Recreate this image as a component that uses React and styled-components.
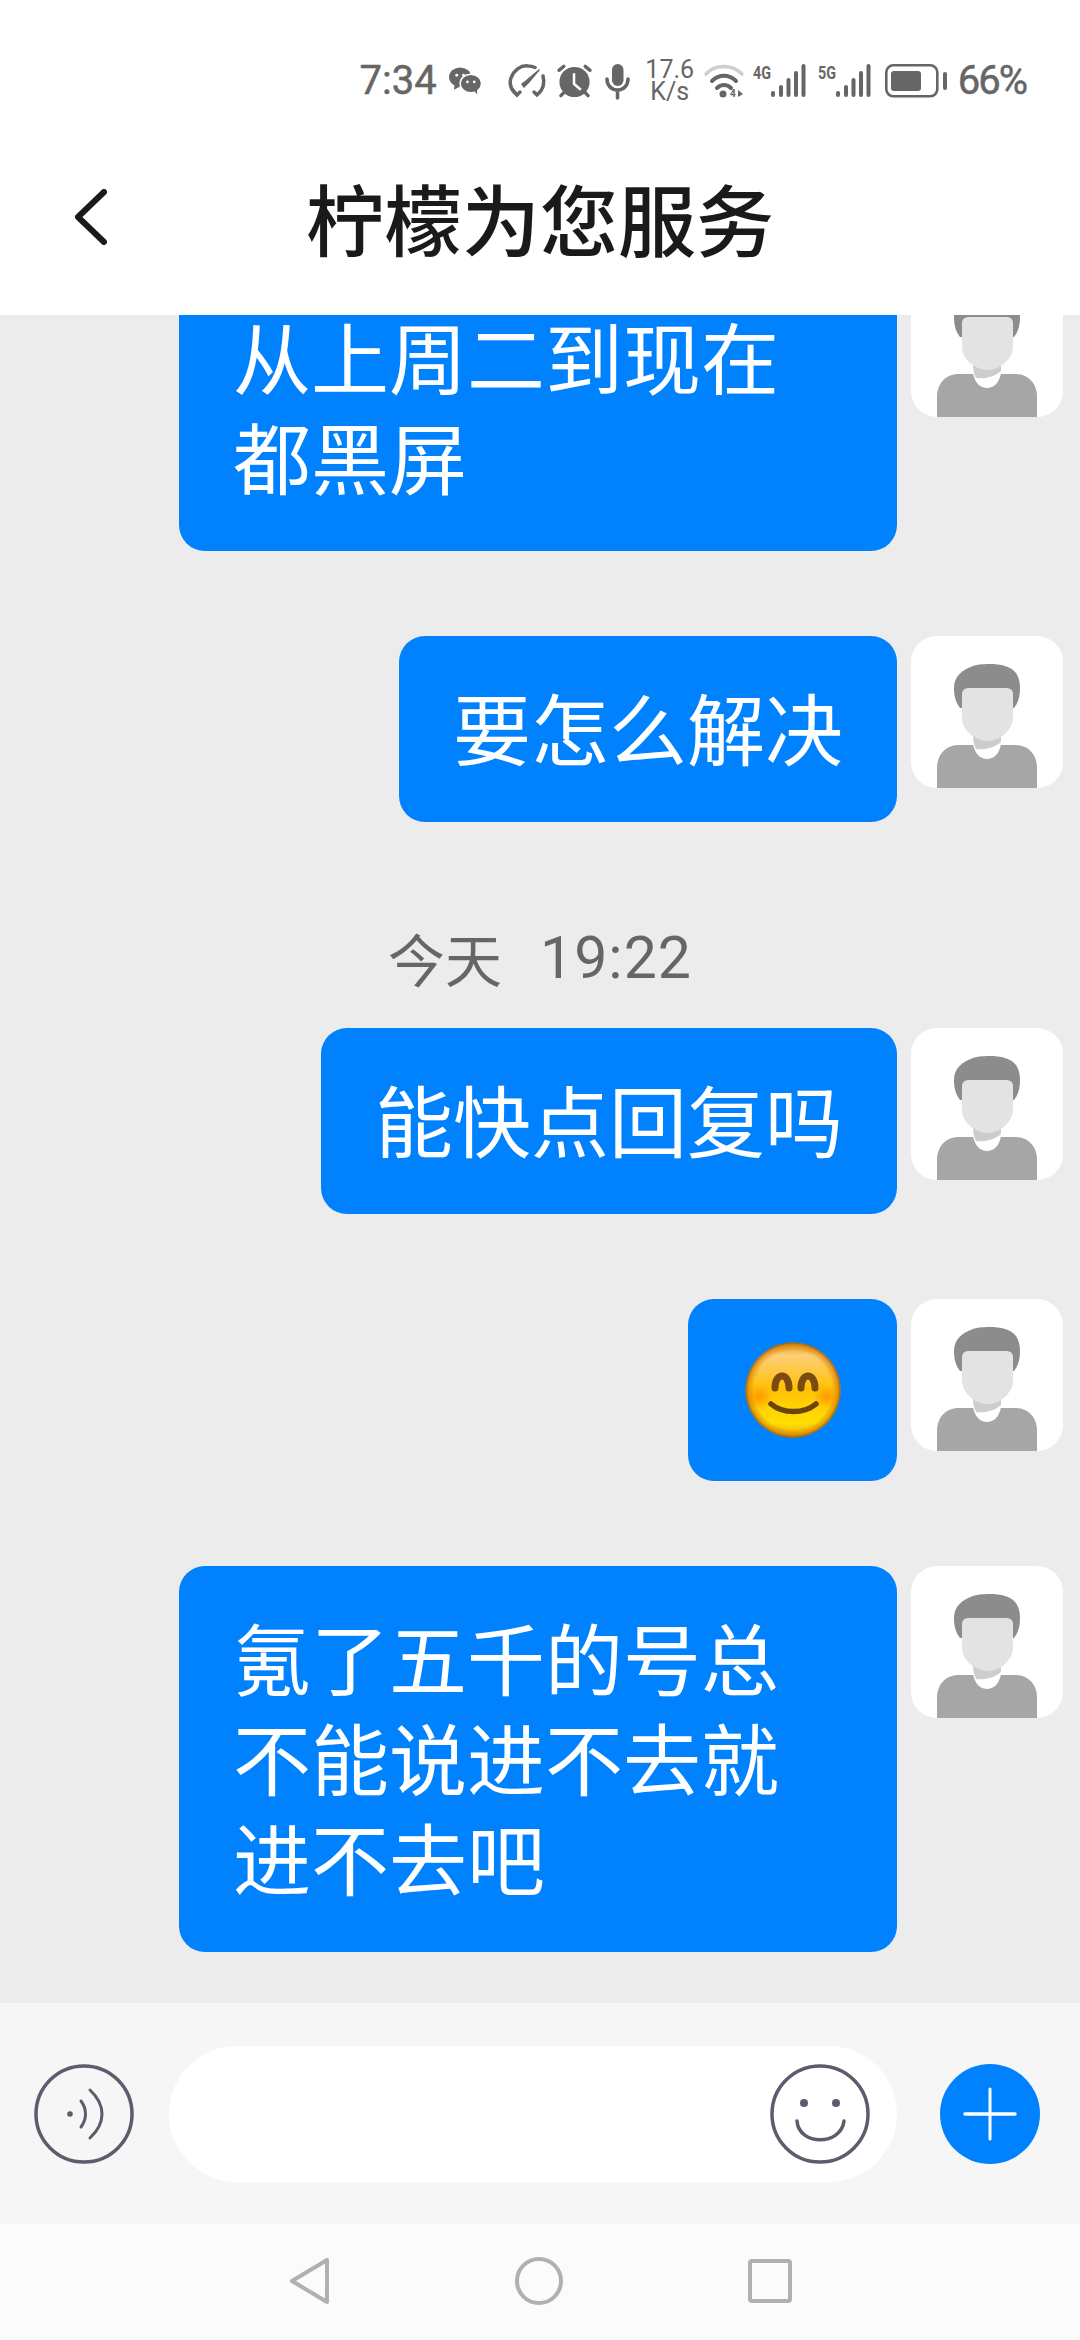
import React from "react";
import styled, { createGlobalStyle } from "styled-components";

const BLUE = "#0082ff";
const CJK = `"Noto Sans CJK SC", "Noto Sans", sans-serif`;

const Global = createGlobalStyle`
  html, body { margin: 0; padding: 0; background: #fff; }
  * { box-sizing: border-box; }
`;

const Page = styled.div`
  width: 1080px;
  height: 2340px;
  display: flex;
  flex-direction: column;
  overflow: hidden;
  font-family: ${CJK};
`;

const StatusBar = styled.div`
  height: 130px;
  padding: 32px 54px 0 0;
  display: flex;
  align-items: center;
  justify-content: flex-end;
  color: #666;
  font-family: Roboto, sans-serif;
  background: #fff;
`;

const StatusText = styled.span`
  font-size: 40px;
  line-height: 40px;
  letter-spacing: ${(p) => p.$spacing || 0}px;
  margin-left: ${(p) => p.$left || 0}px;
  -webkit-text-stroke: 0.5px #666;
`;

const StatusIcon = styled.svg`
  display: block;
  flex: none;
  overflow: visible;
  margin-left: ${(p) => p.$left || 0}px;
`;

const Speed = styled.div`
  width: 44px;
  margin-left: 18px;
  display: flex;
  flex-direction: column;
  align-items: center;
  font-size: 25px;
  line-height: 22px;
  white-space: nowrap;
`;

const Header = styled.div`
  height: 185px;
  padding-bottom: 12px;
  display: grid;
  grid-template-columns: 1fr auto 1fr;
  align-items: center;
  background: #fff;
`;

const BackIcon = styled.svg`
  display: block;
  margin-left: 73px;
`;

const Title = styled.h1`
  margin: 0;
  font-size: 78px;
  line-height: 100px;
  font-weight: 500;
  color: #1a1a1a;
`;

const Chat = styled.div`
  flex: 1;
  min-height: 0;
  overflow: hidden;
  background: #ececec;
  padding: 0 17px 51px 0;
  display: flex;
  flex-direction: column;
  justify-content: flex-end;
  gap: 85px;
`;

const Row = styled.div`
  flex: none;
  display: flex;
  justify-content: flex-end;
  align-items: flex-start;
  gap: 14px;
`;

const Bubble = styled.div`
  max-width: 718px;
  padding: 40px 54px 46px;
  border-radius: 26px;
  background: ${BLUE};
  color: #fff;
  font-size: 78px;
  line-height: 100px;
`;

const EmojiBubble = styled.div`
  width: 209px;
  height: 182px;
  border-radius: 26px;
  background: ${BLUE};
  display: flex;
  align-items: center;
  justify-content: center;
`;

const Stamp = styled.div`
  flex: none;
  height: 70px;
  margin-top: 15px;
  margin-bottom: -49px;
  padding-left: 17px;
  display: flex;
  align-items: center;
  justify-content: center;
  gap: 38px;
  color: #666;
  font-size: 57px;
`;

const StampTime = styled.span`
  font-family: Roboto, sans-serif;
  font-size: 59px;
  letter-spacing: 1px;
`;

const AvatarBox = styled.div`
  width: 152px;
  height: 152px;
  flex: none;
  border-radius: 26px;
  background: #fff;
  overflow: hidden;
`;

const Composer = styled.div`
  height: 221px;
  padding: 0 37px 0 34px;
  background: #f6f6f6;
  display: flex;
  align-items: center;
`;

const RoundIcon = styled.svg`
  display: block;
  flex: none;
`;

const Input = styled.div`
  width: 728px;
  height: 136px;
  margin: 0 43px 0 35px;
  padding-right: 27px;
  border-radius: 68px;
  background: #fff;
  display: flex;
  align-items: center;
  justify-content: flex-end;
`;

const NavBar = styled.div`
  height: 116px;
  padding-bottom: 2px;
  background: #fbfbfb;
  display: flex;
  align-items: center;
  justify-content: center;
  gap: 185px;
`;

const Avatar = () => (
  <AvatarBox>
    <svg width="152" height="152" viewBox="0 0 152 152">
      <path d="M43 52c0-13 9-18 19-22 6-2 22-3 32 0 10 3 15 10 15 22 0 9-2 15-6 20H49c-4-5-6-11-6-20z" fill="#8c8c8c" />
      <path d="M26 152v-20c0-13 8-23 22-23h56c14 0 22 10 22 23v20z" fill="#a6a6a6" />
      <path d="M62 108h28c0 0-2 15-14 15s-14-15-14-15z" fill="#fff" />
      <path d="M62 100h28v6c-7 6-16 8-25 7-2-4-3-8-3-13z" fill="#cdcdcd" />
      <path d="M51 58c0-4 3-6 7-6h37c4 0 7 2 7 6v24c0 6-3 11-8 16-5 4-11 7-17 7-7 0-13-3-18-7-5-5-8-10-8-16z" fill="#e3e3e3" />
    </svg>
  </AvatarBox>
);

const SmileEmoji = () => (
  <svg width="98" height="98" viewBox="0 0 98 98">
    <defs>
      <linearGradient id="face" x1="0" y1="0" x2="0" y2="1">
        <stop offset="0%" stopColor="#ec9a14" />
        <stop offset="14%" stopColor="#fdcf78" />
        <stop offset="48%" stopColor="#ffc107" />
        <stop offset="85%" stopColor="#ffdf00" />
        <stop offset="100%" stopColor="#f0a800" />
      </linearGradient>
      <radialGradient id="rim" cx="50%" cy="50%" r="50%">
        <stop offset="82%" stopColor="#d07a08" stopOpacity="0" />
        <stop offset="95%" stopColor="#d07a08" stopOpacity="0.65" />
        <stop offset="100%" stopColor="#8a5a14" stopOpacity="1" />
      </radialGradient>
      <radialGradient id="blush">
        <stop offset="0%" stopColor="#ff8400" stopOpacity="0.7" />
        <stop offset="100%" stopColor="#ff8400" stopOpacity="0" />
      </radialGradient>
    </defs>
    <circle cx="49" cy="49" r="47.500" fill="url(#face)" />
    <ellipse cx="15" cy="56" rx="14" ry="12" fill="url(#blush)" />
    <ellipse cx="83" cy="56" rx="14" ry="12" fill="url(#blush)" />
    <circle cx="49" cy="49" r="47.500" fill="url(#rim)" />
    <path d="M31 47c0-16 14-16 14 0" fill="none" stroke="#7a4a10" strokeWidth="7" strokeLinecap="round" />
    <path d="M57 47c0-16 14-16 14 0" fill="none" stroke="#7a4a10" strokeWidth="7" strokeLinecap="round" />
    <path d="M27 63c12 10 33 10 45 0" fill="none" stroke="#6b4310" strokeWidth="5.500" strokeLinecap="round" />
  </svg>
);

const WechatIcon = () => (
  <StatusIcon $left={12} width="33" height="28" viewBox="0 0 34 28" fill="#666">
    <ellipse cx="11.500" cy="10" rx="11.500" ry="10" />
    <path d="M6 17l-1 6 6-3z" />
    <ellipse cx="22.500" cy="16.500" rx="11" ry="9.500" stroke="#fff" strokeWidth="1.500" />
    <path d="M26 24l3 4v-6z" />
    <circle cx="8" cy="8" r="1.500" fill="#fff" />
    <circle cx="15" cy="8" r="1.500" fill="#fff" />
    <circle cx="19" cy="15" r="1.400" fill="#fff" />
    <circle cx="26" cy="15" r="1.400" fill="#fff" />
  </StatusIcon>
);

const GaugeIcon = () => (
  <StatusIcon $left={27} width="36" height="34" viewBox="0 0 36 34" fill="none" stroke="#666" strokeWidth="3.500" strokeLinecap="round">
    <path d="M8 31C2 26 0 20 2 14 5 6 12 1 19 2c3 0 5 .5 7 1.500" />
    <path d="M3 25l5 6 3-3" />
    <path d="M34 12c2 7 0 14-6 19l-3-3" />
    <path d="M30 6L19 19l-4 4-2-3 4-3z" fill="#666" strokeWidth="1.500" strokeLinejoin="round" />
  </StatusIcon>
);

const AlarmIcon = () => (
  <StatusIcon $left={12} width="35" height="34" viewBox="0 0 36 34">
    <circle cx="18" cy="18" r="15.500" fill="#666" />
    <path d="M17.500 9v11l7 6" fill="none" stroke="#fff" strokeWidth="2.600" />
    <path d="M2 6l5-4M34 6l-5-4M7 29l-3 3M29 29l3 3" stroke="#666" strokeWidth="3.500" strokeLinecap="round" />
  </StatusIcon>
);

const MicIcon = () => (
  <StatusIcon $left={13} width="25" height="34" viewBox="0 0 25 34" fill="none" stroke="#666" strokeWidth="3.500" strokeLinecap="round">
    <rect x="7" y="0" width="11.500" height="22" rx="5.700" fill="#666" stroke="none" />
    <path d="M2 15c0 6 4 11 10.500 11s10.500-5 10.500-11M12.500 26v8" />
  </StatusIcon>
);

const WifiIcon = () => (
  <StatusIcon $left={12} width="41" height="34" viewBox="0 0 41 34" fill="none" strokeLinecap="round">
    <path d="M2 10C11 0 28 0 38 10" stroke="#cfcfcf" strokeWidth="3.500" />
    <path d="M8 17c7-7 17-7 24 0" stroke="#666" strokeWidth="4" />
    <path d="M13 24c4-4 10-4 14 0" stroke="#666" strokeWidth="4" />
    <circle cx="19" cy="30" r="3.500" fill="#666" />
    <text x="26" y="33" fontFamily="Roboto, sans-serif" fontWeight="700" fontSize="10" fill="#666">4</text>
    <path d="M34 26v7l5-3z" fill="#666" />
  </StatusIcon>
);

const SignalIcon = ({ label, left }) => (
  <StatusIcon $left={left} width="53" height="34" viewBox="0 0 53 34">
    <text x="0" y="15" fontFamily="Roboto, sans-serif" fontWeight="700" fontSize="19" fill="#666" textLength="18" lengthAdjust="spacingAndGlyphs">{label}</text>
    <g stroke="#666" strokeWidth="4" strokeLinecap="round">
      <path d="M20 31v-2M28 31v-8M35.500 31V16M43 31V9M50.500 31V2" />
    </g>
  </StatusIcon>
);

const BatteryIcon = () => (
  <StatusIcon $left={14} width="62" height="34" viewBox="0 0 62 34">
    <rect x="1.300" y="1.300" width="51" height="31" rx="7" fill="none" stroke="#666" strokeWidth="2.600" />
    <rect x="6" y="7" width="30" height="20" rx="3" fill="#666" />
    <rect x="58" y="8" width="4" height="18" rx="2" fill="#666" />
  </StatusIcon>
);

const messages = [
  "从上周二到现在都黑屏",
  "要怎么解决",
  { stamp: ["今天", "19:22"] },
  "能快点回复吗",
  { emoji: true },
  "氪了五千的号总不能说进不去就进不去吧",
];

export default function App() {
  return (
    <Page>
      <Global />
      <StatusBar>
        <StatusText>7:34</StatusText>
        <WechatIcon />
        <GaugeIcon />
        <AlarmIcon />
        <MicIcon />
        <Speed>
          <span>17.6</span>
          <span>K/s</span>
        </Speed>
        <WifiIcon />
        <SignalIcon label="4G" left={8} />
        <SignalIcon label="5G" left={12} />
        <BatteryIcon />
        <StatusText $left={11} $spacing={-2}>66%</StatusText>
      </StatusBar>

      <Header>
        <BackIcon width="34" height="56" viewBox="0 0 34 56" fill="none" stroke="#1a1a1a" strokeWidth="6" strokeLinecap="round" strokeLinejoin="round">
          <path d="M31 3L5 28l26 25" />
        </BackIcon>
        <Title>柠檬为您服务</Title>
        <span />
      </Header>

      <Chat>
        {messages.map((m, i) => {
          if (m.stamp) {
            return (
              <Stamp key={i}>
                <span>{m.stamp[0]}</span>
                <StampTime>{m.stamp[1]}</StampTime>
              </Stamp>
            );
          }
          return (
            <Row key={i}>
              {m.emoji ? (
                <EmojiBubble>
                  <SmileEmoji />
                </EmojiBubble>
              ) : (
                <Bubble>{m}</Bubble>
              )}
              <Avatar />
            </Row>
          );
        })}
      </Chat>

      <Composer>
        <RoundIcon width="100" height="100" viewBox="0 0 100 100" fill="none" stroke="#5c5c6c" strokeLinecap="round">
          <circle cx="50" cy="50" r="48" strokeWidth="3.500" />
          <circle cx="36" cy="50" r="2.800" fill="#5c5c6c" stroke="none" />
          <path d="M47 37c6 8 6 18 0 26" strokeWidth="3" />
          <path d="M56 26c16 15 16 33 0 48" strokeWidth="3" />
        </RoundIcon>
        <Input>
          <RoundIcon width="100" height="100" viewBox="0 0 100 100" fill="none" stroke="#5c5c6c" strokeLinecap="round">
            <circle cx="50" cy="50" r="48" strokeWidth="3.500" />
            <circle cx="34" cy="39" r="4" fill="#5c5c6c" stroke="none" />
            <circle cx="66" cy="39" r="4" fill="#5c5c6c" stroke="none" />
            <path d="M27 57c2 25 44 25 47 0" strokeWidth="3.500" />
          </RoundIcon>
        </Input>
        <RoundIcon width="100" height="100" viewBox="0 0 100 100" fill="none" stroke="#fff" strokeLinecap="round">
          <circle cx="50" cy="50" r="50" fill={BLUE} stroke="none" />
          <path d="M25 50h50" strokeWidth="3.500" />
          <path d="M50 25v50" strokeWidth="3" />
        </RoundIcon>
      </Composer>

      <NavBar>
        <svg width="41" height="48" viewBox="0 0 41 48" fill="none" stroke="#b0b0b0" strokeWidth="4" strokeLinejoin="round">
          <path d="M38 3v42L3 24z" />
        </svg>
        <svg width="48" height="48" viewBox="0 0 48 48" fill="none" stroke="#b0b0b0" strokeWidth="4">
          <circle cx="24" cy="24" r="22" />
        </svg>
        <svg width="44" height="44" viewBox="0 0 44 44" fill="none" stroke="#b0b0b0" strokeWidth="4" strokeLinejoin="round">
          <rect x="2" y="2" width="40" height="40" rx="2" />
        </svg>
      </NavBar>
    </Page>
  );
}
